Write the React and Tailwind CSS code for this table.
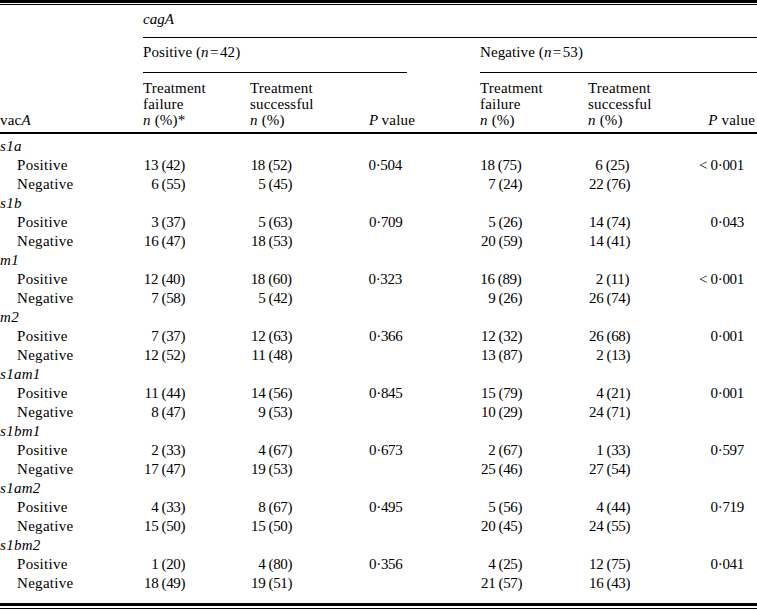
import React from "react";

const groups = [
  ["s1a", ["13 (42)", "18 (52)", "0·504", "18 (75)", "6 (25)", "< 0·001"], ["6 (55)", "5 (45)", "7 (24)", "22 (76)"]],
  ["s1b", ["3 (37)", "5 (63)", "0·709", "5 (26)", "14 (74)", "0·043"], ["16 (47)", "18 (53)", "20 (59)", "14 (41)"]],
  ["m1", ["12 (40)", "18 (60)", "0·323", "16 (89)", "2 (11)", "< 0·001"], ["7 (58)", "5 (42)", "9 (26)", "26 (74)"]],
  ["m2", ["7 (37)", "12 (63)", "0·366", "12 (32)", "26 (68)", "0·001"], ["12 (52)", "11 (48)", "13 (87)", "2 (13)"]],
  ["s1am1", ["11 (44)", "14 (56)", "0·845", "15 (79)", "4 (21)", "0·001"], ["8 (47)", "9 (53)", "10 (29)", "24 (71)"]],
  ["s1bm1", ["2 (33)", "4 (67)", "0·673", "2 (67)", "1 (33)", "0·597"], ["17 (47)", "19 (53)", "25 (46)", "27 (54)"]],
  ["s1am2", ["4 (33)", "8 (67)", "0·495", "5 (56)", "4 (44)", "0·719"], ["15 (50)", "15 (50)", "20 (45)", "24 (55)"]],
  ["s1bm2", ["1 (20)", "4 (80)", "0·356", "4 (25)", "12 (75)", "0·041"], ["18 (49)", "19 (51)", "21 (57)", "16 (43)"]],
];

function Num({ children }) {
  return <div className="w-[42px] text-right whitespace-nowrap tracking-[-0.4px]">{children}</div>;
}

function DataRow({ label, v }) {
  return (
    <div className="flex h-[19px] items-start">
      <div className="w-[143px] pl-[17px] tracking-[0.3px]">{label}</div>
      <div className="w-[107px]"><Num>{v[0]}</Num></div>
      <div className="w-[119px]"><Num>{v[1]}</Num></div>
      <div className="w-[111px] tracking-[-0.3px]">{v[2] || ""}</div>
      <div className="w-[108px]"><Num>{v[3]}</Num></div>
      <div className="w-[112px]"><Num>{v[4]}</Num></div>
      <div className="flex-1 text-right pr-[13px] tracking-[-0.3px] whitespace-nowrap">{v[5] || ""}</div>
    </div>
  );
}

function HeadCell({ lines, w, className = "" }) {
  return (
    <div className={`${w} flex flex-col justify-end leading-[16px] tracking-[0.2px] ${className}`}>
      {lines.map((l, i) => (
        <div key={i}>{l}</div>
      ))}
    </div>
  );
}

export default function App() {
  return (
    <div
      className="w-[757px] h-[609px] bg-white text-black text-[15px] leading-[19px] overflow-hidden"
      style={{ fontFamily: '"Liberation Serif", "Times New Roman", serif' }}
    >
      <div className="h-[3px] bg-black" />
      <div className="h-[1px]" />
      <div className="h-[1px] bg-black" />
      {/* cagA row */}
      <div className="flex h-[33px]">
        <div className="w-[143px]" />
        <div className="flex-1 border-b border-black pt-[6px] leading-[16px] italic">cagA</div>
      </div>
      {/* positive / negative */}
      <div className="flex h-[35px]">
        <div className="w-[143px]" />
        <div className="w-[264px] border-b border-black pt-[6px] leading-[16px] tracking-[0.1px]">
          Positive (<span className="italic">n</span>&#8202;=&#8202;42)
        </div>
        <div className="w-[73px]" />
        <div className="flex-1 border-b border-black pt-[6px] leading-[16px] tracking-[0.1px]">
          Negative (<span className="italic">n</span>&#8202;=&#8202;53)
        </div>
      </div>
      {/* column headers */}
      <div className="flex h-[61px] border-b-2 border-black pb-[4px]">
        <HeadCell w="w-[143px]" lines={[<span>vac<span className="italic">A</span></span>]} />
        <HeadCell w="w-[107px]" lines={["Treatment", "failure", <span><span className="italic">n</span> (%)*</span>]} />
        <HeadCell w="w-[119px]" lines={["Treatment", "successful", <span><span className="italic">n</span> (%)</span>]} />
        <HeadCell
          w="w-[111px]"
          className="tracking-[-0.2px]"
          lines={[<span><span className="italic">P</span>&#8201;value</span>]}
        />
        <HeadCell w="w-[108px]" lines={["Treatment", "failure", <span><span className="italic">n</span> (%)</span>]} />
        <HeadCell w="w-[112px]" lines={["Treatment", "successful", <span><span className="italic">n</span> (%)</span>]} />
        <HeadCell w="flex-1" className="text-right pr-[2px]" lines={[<span><span className="italic">P</span> value</span>]} />
      </div>
      {/* body */}
      <div className="pt-[3px] h-[469px]">
        {groups.map(([name, pos, neg]) => (
          <div key={name}>
            <div className="h-[19px] italic tracking-[0.3px]">{name}</div>
            <DataRow label="Positive" v={pos} />
            <DataRow label="Negative" v={[neg[0], neg[1], "", neg[2], neg[3], ""]} />
          </div>
        ))}
      </div>
      <div className="h-[3px] bg-black" />
      <div className="h-[2px]" />
      <div className="h-[1px] bg-black" />
    </div>
  );
}
